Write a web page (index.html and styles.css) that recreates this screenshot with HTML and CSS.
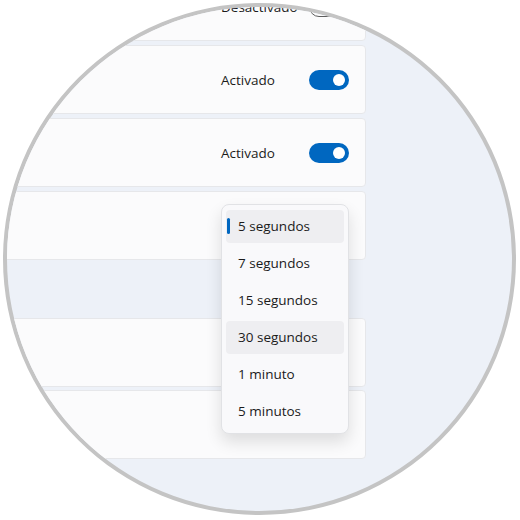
FILE: index.html
```html
<!DOCTYPE html>
<html lang="es">
<head>
    <meta charset="UTF-8">
    <meta name="viewport" content="width=device-width, initial-scale=1.0">
    <title>Notificaciones</title>
    <link rel="stylesheet" href="styles.css">
</head>
<body>
    <div class="lens">
        <div class="settings">
            <div class="row">
                <span class="state">Desactivado</span>
                <span class="toggle off"></span>
            </div>
            <div class="row">
                <span class="state">Activado</span>
                <span class="toggle on"></span>
            </div>
            <div class="row">
                <span class="state">Activado</span>
                <span class="toggle on"></span>
            </div>
            <div class="row"></div>
            <div class="row group-start"></div>
            <div class="row tight"></div>
        </div>

        <!-- Duration flyout -->
        <ul class="menu">
            <li class="item selected">5 segundos</li>
            <li class="item">7 segundos</li>
            <li class="item">15 segundos</li>
            <li class="item hover">30 segundos</li>
            <li class="item">1 minuto</li>
            <li class="item">5 minutos</li>
        </ul>
    </div>
</body>
</html>
```

FILE: styles.css
```css
body {
    margin: 0;
    background-color: #ffffff;
    font-family: "Open Sans", "Noto Sans", sans-serif;
    color: #1b1b1b;
}
.lens {
    position: relative;
    width: 513px;
    height: 512px;
    margin: 3px 0 0 3px;
    box-sizing: border-box;
    border: 4px solid #c4c4c4;
    border-radius: 50%;
    overflow: hidden;
    background-color: #edf1f8;
}
.settings {
    display: flex;
    flex-direction: column;
    gap: 4px;
    width: 376px;
    margin: -35px 0 0 -17px;
}
.row {
    display: flex;
    align-items: center;
    justify-content: flex-end;
    height: 69px;
    box-sizing: border-box;
    padding-right: 16px;
    background-color: #fbfbfc;
    border: 1px solid #e6e7ea;
    border-radius: 4px;
}
.row.group-start {
    margin-top: 54px;
}
.row.tight {
    margin-top: -1px;
}
.state {
    width: 88px;
    font-size: 13.5px;
}
.toggle {
    position: relative;
    width: 40px;
    height: 20px;
    box-sizing: border-box;
    border-radius: 10px;
}
.toggle::after {
    content: "";
    position: absolute;
    top: 50%;
    width: 12px;
    height: 12px;
    margin-top: -6px;
    border-radius: 50%;
}
.toggle.on {
    background-color: #0067c0;
}
.toggle.on::after {
    right: 4px;
    background-color: #ffffff;
}
.toggle.off {
    border: 1px solid #5d5d5d;
}
.toggle.off::after {
    left: 3px;
    width: 10px;
    height: 10px;
    margin-top: -5px;
    background-color: #5d5d5d;
}
.menu {
    position: absolute;
    left: 214px;
    top: 197px;
    width: 128px;
    margin: 0;
    padding: 5px 4px;
    box-sizing: border-box;
    list-style: none;
    display: flex;
    flex-direction: column;
    gap: 4px;
    background-color: #f9f9fb;
    border: 1px solid #e1e2e5;
    border-radius: 8px;
    box-shadow: 0 8px 16px rgba(0, 0, 0, 0.12);
}
.item {
    position: relative;
    height: 33px;
    line-height: 33px;
    padding-left: 12px;
    font-size: 13.5px;
    border-radius: 4px;
}
.item.selected,
.item.hover {
    background-color: #eeeef1;
}
.item.selected::before {
    content: "";
    position: absolute;
    left: 1px;
    top: 8px;
    width: 3px;
    height: 16px;
    border-radius: 2px;
    background-color: #0067c0;
}
```
